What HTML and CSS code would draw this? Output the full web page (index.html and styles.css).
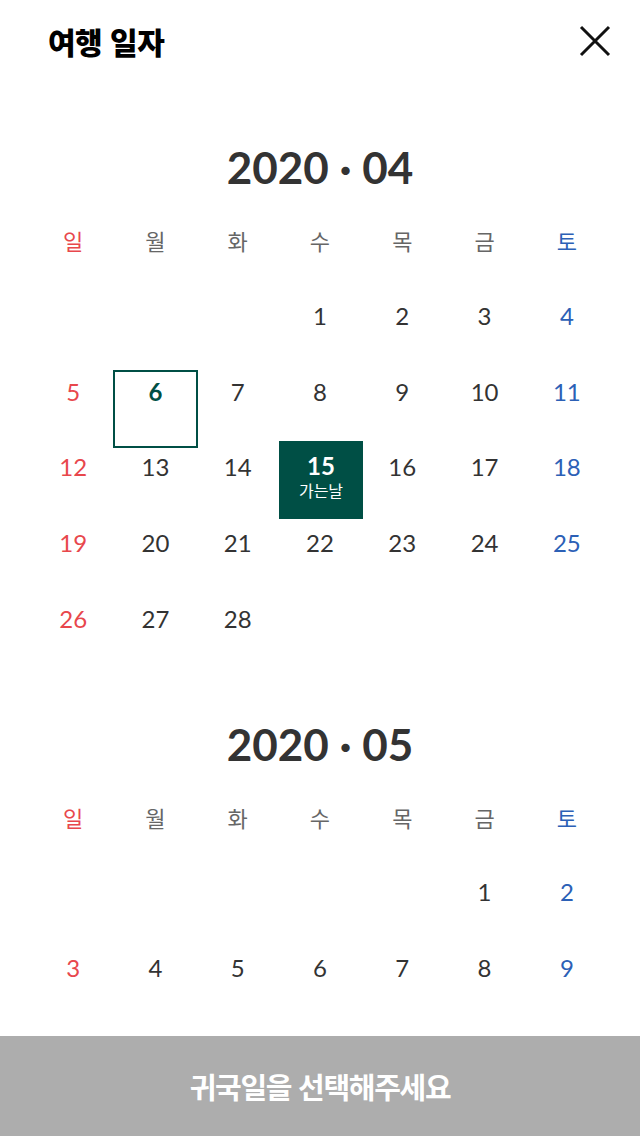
FILE: index.html
```html
<!DOCTYPE html>
<html lang="ko">
<head>
<meta charset="utf-8">
<title>여행 일자</title>
<link rel="stylesheet" href="styles.css">
</head>
<body>
<div class="app">
  <div class="scroller">
    <header class="header">
      <h1 class="title">여행 일자</h1>
      <button class="close" aria-label="닫기">
        <svg width="34" height="34" viewBox="0 0 34 34"><path d="M3 3 L31 31 M31 3 L3 31" stroke="#111" stroke-width="3" fill="none"/></svg>
      </button>
    </header>

    <section class="month">
      <h2 class="month-title">2020 · 04</h2>
      <div class="grid">
        <div class="wd sun">일</div><div class="wd">월</div><div class="wd">화</div><div class="wd">수</div><div class="wd">목</div><div class="wd">금</div><div class="wd sat">토</div>
        <div class="day"></div><div class="day"></div><div class="day"></div>
        <div class="day"><span class="num">1</span></div>
        <div class="day"><span class="num">2</span></div>
        <div class="day"><span class="num">3</span></div>
        <div class="day sat"><span class="num">4</span></div>
        <div class="day sun"><span class="num">5</span></div>
        <div class="day today"><span class="num">6</span></div>
        <div class="day"><span class="num">7</span></div>
        <div class="day"><span class="num">8</span></div>
        <div class="day"><span class="num">9</span></div>
        <div class="day"><span class="num">10</span></div>
        <div class="day sat"><span class="num">11</span></div>
        <div class="day sun"><span class="num">12</span></div>
        <div class="day"><span class="num">13</span></div>
        <div class="day"><span class="num">14</span></div>
        <div class="day depart"><span class="num">15</span><span class="label">가는날</span></div>
        <div class="day"><span class="num">16</span></div>
        <div class="day"><span class="num">17</span></div>
        <div class="day sat"><span class="num">18</span></div>
        <div class="day sun"><span class="num">19</span></div>
        <div class="day"><span class="num">20</span></div>
        <div class="day"><span class="num">21</span></div>
        <div class="day"><span class="num">22</span></div>
        <div class="day"><span class="num">23</span></div>
        <div class="day"><span class="num">24</span></div>
        <div class="day sat"><span class="num">25</span></div>
        <div class="day sun"><span class="num">26</span></div>
        <div class="day"><span class="num">27</span></div>
        <div class="day"><span class="num">28</span></div>
      </div>
    </section>

    <section class="month">
      <h2 class="month-title">2020 · 05</h2>
      <div class="grid">
        <div class="wd sun">일</div><div class="wd">월</div><div class="wd">화</div><div class="wd">수</div><div class="wd">목</div><div class="wd">금</div><div class="wd sat">토</div>
        <div class="day"></div><div class="day"></div><div class="day"></div><div class="day"></div><div class="day"></div>
        <div class="day"><span class="num">1</span></div>
        <div class="day sat"><span class="num">2</span></div>
        <div class="day sun"><span class="num">3</span></div>
        <div class="day"><span class="num">4</span></div>
        <div class="day"><span class="num">5</span></div>
        <div class="day"><span class="num">6</span></div>
        <div class="day"><span class="num">7</span></div>
        <div class="day"><span class="num">8</span></div>
        <div class="day sat"><span class="num">9</span></div>
      </div>
    </section>
  </div>
  <button class="cta">귀국일을 선택해주세요</button>
</div>
</body>
</html>
```

FILE: styles.css
```css
* { box-sizing: border-box; }
html, body { margin: 0; padding: 0; }
body {
  background: #fff;
  color: #333;
  font-family: Lato, "Noto Sans CJK KR", sans-serif;
}
.app {
  height: 100vh;
  display: flex;
  flex-direction: column;
  overflow: hidden;
}
.scroller {
  flex: 1;
  overflow-y: auto;
  scrollbar-width: none;
}
.scroller::-webkit-scrollbar { display: none; }

.header {
  height: 81px;
  display: flex;
  align-items: center;
  justify-content: space-between;
  padding: 0 28px 0 48px;
}
.title {
  margin: 0;
  font-family: "Noto Sans CJK KR", sans-serif;
  font-size: 30px;
  font-weight: 900;
  color: #000;
  letter-spacing: -0.5px;
  line-height: 40px;
}
.close {
  border: 0;
  background: none;
  padding: 0;
  width: 34px;
  height: 34px;
  display: flex;
}

.month {
  padding: 58px 32px 0;
}
.month-title {
  margin: 0 0 8px;
  height: 56px;
  line-height: 56px;
  text-align: center;
  font-family: Lato, sans-serif;
  font-weight: 700;
  font-size: 44px;
  color: #333;
}
.grid {
  display: grid;
  grid-template-columns: repeat(7, 1fr);
  grid-auto-rows: 75.75px;
}
.wd {
  margin-top: 15px;
  padding-top: 8px;
  line-height: 28px;
  text-align: center;
  font-family: "Noto Sans CJK KR", sans-serif;
  font-size: 22px;
  color: #666;
}
.day {
  align-self: start;
  height: 78px;
  margin: 15px -1px 0;
  padding-top: 8px;
  display: flex;
  flex-direction: column;
  align-items: center;
}
.num {
  line-height: 28px;
  font-size: 24px;
  font-family: Lato, sans-serif;
}
.sun { color: #e8474c; }
.sat { color: #2c60b6; }

.today {
  border: 2px solid #004f45;
  padding-top: 6px;
}
.today .num {
  font-weight: 700;
  color: #004f45;
}
.depart {
  background: #004f45;
  color: #fff;
  margin-top: 11px;
  padding-top: 11px;
  margin-left: 0;
  margin-right: -2px;
}
.depart .num { font-weight: 700; }
.depart .label {
  font-family: "Noto Sans CJK KR", sans-serif;
  font-size: 16px;
  line-height: 20px;
}

.cta {
  flex: none;
  height: 100px;
  border: 0;
  background: #adadad;
  color: #fff;
  font-family: "Noto Sans CJK KR", sans-serif;
  font-size: 29px;
  font-weight: 700;
  letter-spacing: -1.3px;
  width: 100%;
}
```
